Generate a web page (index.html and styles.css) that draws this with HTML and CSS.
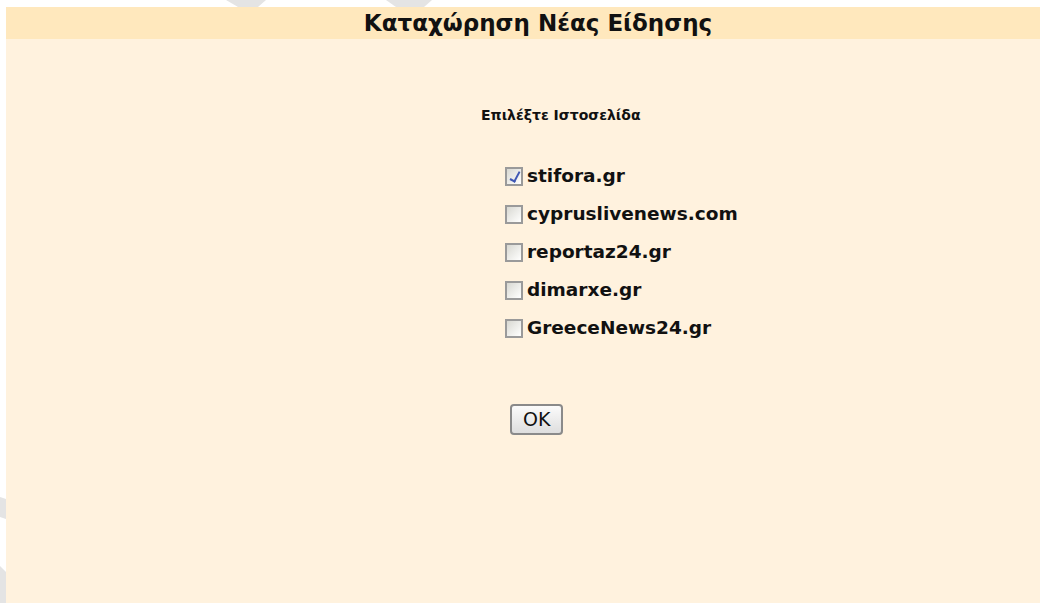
FILE: index.html
```html
<!DOCTYPE html>
<html lang="el">
<head>
<meta charset="utf-8">
<title>Καταχώρηση Νέας Είδησης</title>
<link rel="stylesheet" href="styles.css">
</head>
<body>
<svg class="watermark" width="1040" height="603" viewBox="0 0 1040 603" aria-hidden="true">
  <polygon points="226,0 266,0 258,7 238,7" />
  <polygon points="386,0 432,0 424,7 396,7" />
  <polygon points="0,497 6,499 6,519 0,517" />
  <polygon points="0,566 6,572 6,603 0,603" />
</svg>
<div class="panel">
  <div class="panel-head">Καταχώρηση Νέας Είδησης</div>
  <form class="panel-body">
    <div class="pick-title">Επιλέξτε Ιστοσελίδα</div>
    <ul class="sites">
      <li><label><input type="checkbox" checked><span>stifora.gr</span></label></li>
      <li><label><input type="checkbox"><span>cypruslivenews.com</span></label></li>
      <li><label><input type="checkbox"><span>reportaz24.gr</span></label></li>
      <li><label><input type="checkbox"><span>dimarxe.gr</span></label></li>
      <li><label><input type="checkbox"><span>GreeceNews24.gr</span></label></li>
    </ul>
    <div class="actions"><button type="button" class="ok-btn">OK</button></div>
  </form>
</div>
</body>
</html>
```

FILE: styles.css
```css
html, body {
  margin: 0;
  padding: 0;
  height: 100%;
  background: #ffffff;
  overflow: hidden;
}

body {
  position: relative;
  font-family: "DejaVu Sans", Verdana, sans-serif;
  color: #111111;
}

/* faint grey shapes showing through the white margin */
.watermark {
  position: absolute;
  left: 0;
  top: 0;
  z-index: 0;
}
.watermark polygon {
  fill: #e4e4e4;
}

.panel {
  position: relative;
  z-index: 1;
  margin: 7px 0 0 6px;
  height: calc(100% - 7px);
  background: #fff2de;
}

.panel-head {
  height: 32px;
  line-height: 32px;
  padding-left: 30px;
  background: #ffe8bd;
  text-align: center;
  font-weight: bold;
  font-size: 23px;
}

.panel-body {
  display: flex;
  flex-direction: column;
  margin: 0;
  padding-top: 67px;
}

.pick-title {
  margin-left: 475px;
  font-size: 14px;
  font-weight: bold;
  line-height: 18px;
}

.sites {
  list-style: none;
  margin: 42px 0 0 499px;
  padding: 0;
  display: flex;
  flex-direction: column;
  gap: 18px;
}

.sites label {
  display: flex;
  align-items: center;
  gap: 4px;
  height: 20px;
  font-size: 18.5px;
  font-weight: bold;
  line-height: 20px;
}

.sites input {
  appearance: none;
  -webkit-appearance: none;
  margin: 0;
  width: 18px;
  height: 19px;
  border: 2px solid #9a9a9a;
  background: linear-gradient(135deg, #d8d8d2 0%, #f2f2ef 65%, #ffffff 100%);
  box-sizing: border-box;
  position: relative;
}

.sites input:checked::after {
  content: "";
  position: absolute;
  left: 5px;
  top: 1px;
  width: 4px;
  height: 10px;
  border: solid #4058b4;
  border-width: 0 2px 2px 0;
  transform: rotate(28deg);
}

.actions {
  margin: 66px 0 0 504px;
}

.ok-btn {
  font-family: "DejaVu Sans", Verdana, sans-serif;
  font-size: 19px;
  color: #111111;
  padding: 3px 11px;
  border: 2px solid #8a8a8a;
  border-radius: 4px;
  background: linear-gradient(#fbfbfb, #dedede);
  line-height: 21px;
}
```
